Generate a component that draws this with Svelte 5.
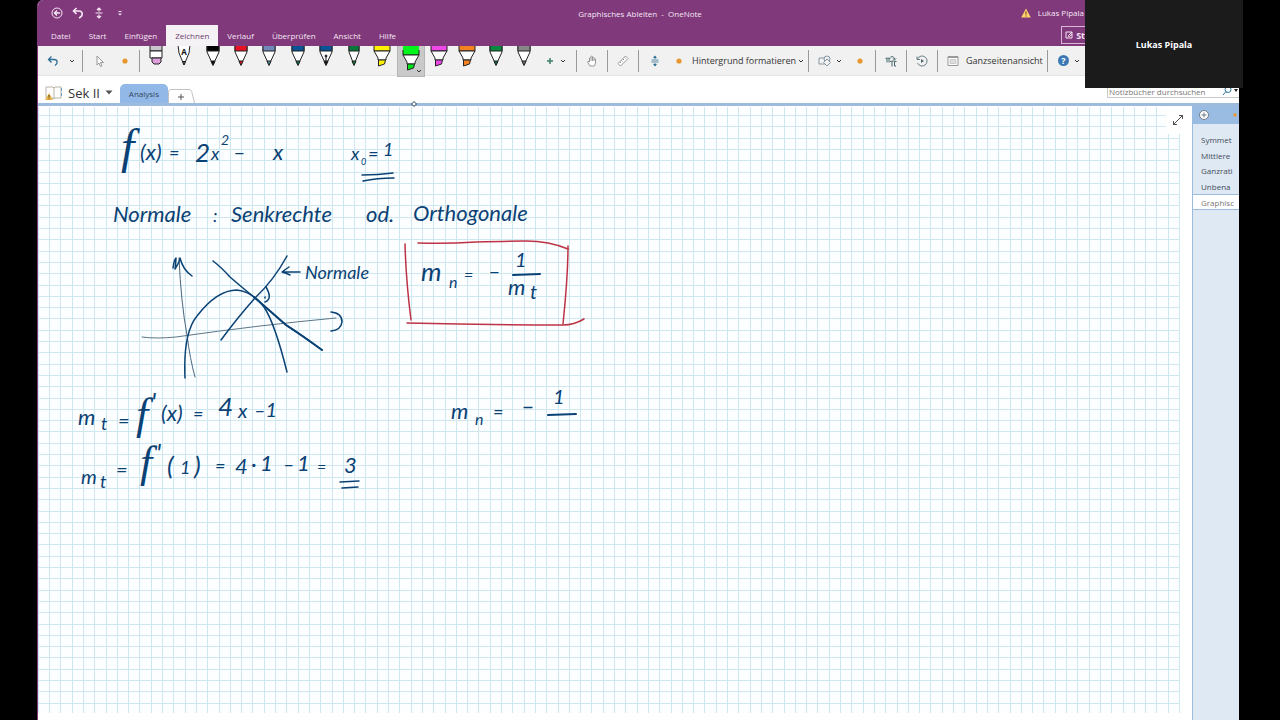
<script lang="ts">
  interface Pen {
    readonly kind: "eraser" | "text" | "pen" | "fountain" | "pencil" | "marker";
    readonly color: string;
    readonly tip: string;
    readonly label: string;
  }

  interface Note {
    readonly x: number;
    readonly y: number;
    readonly size: number;
    readonly text: string;
  }

  const tabs = ["Datei", "Start", "Einfügen", "Zeichnen", "Verlauf", "Überprüfen", "Ansicht", "Hilfe"];
  const pages = ["Symmet", "Mittlere", "Ganzrati", "Unbena", "Graphisc"];

  const pens: Pen[] = [
    { kind: "eraser", color: "#c9c5cc", tip: "#dda0dd", label: "Radierer" },
    { kind: "text", color: "#f2f2f2", tip: "#777", label: "Textstift" },
    { kind: "pen", color: "#000", tip: "#000", label: "Stift schwarz" },
    { kind: "pen", color: "#e81224", tip: "#e81224", label: "Stift rot" },
    { kind: "pen", color: "#7088b8", tip: "#4b9aa8", label: "Stift Galaxie" },
    { kind: "pen", color: "#0b5394", tip: "#087a55", label: "Stift blau" },
    { kind: "fountain", color: "#0b5394", tip: "#111", label: "Füller blau" },
    { kind: "pencil", color: "#08783b", tip: "#08783b", label: "Stift grün" },
    { kind: "marker", color: "#fff100", tip: "#fff100", label: "Textmarker gelb" },
    { kind: "marker", color: "#00f51a", tip: "#00e51a", label: "Textmarker grün" },
    { kind: "marker", color: "#ee48e8", tip: "#ee48e8", label: "Textmarker pink" },
    { kind: "marker", color: "#f58220", tip: "#f58220", label: "Textmarker orange" },
    { kind: "pen", color: "#08873e", tip: "#08783b", label: "Stift dunkelgrün" },
    { kind: "pen", color: "#888", tip: "#777", label: "Bleistift" },
  ];

  const notes: Note[] = [
    { x: 121, y: 163, size: 48, text: "f" },
    { x: 140, y: 160, size: 22, text: "(x)" },
    { x: 169, y: 159, size: 18, text: "=" },
    { x: 195, y: 162, size: 26, text: "2" },
    { x: 211, y: 160, size: 18, text: "x" },
    { x: 221, y: 145, size: 14, text: "2" },
    { x: 233, y: 160, size: 22, text: "–" },
    { x: 273, y: 160, size: 22, text: "x" },
    { x: 351, y: 160, size: 18, text: "x" },
    { x: 361, y: 165, size: 9, text: "0" },
    { x: 368, y: 160, size: 18, text: "=" },
    { x: 383, y: 156, size: 18, text: "1" },
    { x: 113, y: 222, size: 22, text: "Normale" },
    { x: 213, y: 222, size: 18, text: ":" },
    { x: 231, y: 222, size: 22, text: "Senkrechte" },
    { x: 366, y: 222, size: 22, text: "od." },
    { x: 413, y: 221, size: 22, text: "Orthogonale" },
    { x: 305, y: 279, size: 18, text: "Normale" },
    { x: 421, y: 281, size: 26, text: "m" },
    { x: 449, y: 288, size: 16, text: "n" },
    { x: 464, y: 281, size: 16, text: "=" },
    { x: 488, y: 279, size: 22, text: "–" },
    { x: 515, y: 267, size: 20, text: "1" },
    { x: 508, y: 295, size: 22, text: "m" },
    { x: 530, y: 299, size: 20, text: "t" },
    { x: 78, y: 425, size: 22, text: "m" },
    { x: 101, y: 430, size: 18, text: "t" },
    { x: 118, y: 428, size: 20, text: "=" },
    { x: 136, y: 429, size: 44, text: "f" },
    { x: 151, y: 411, size: 26, text: "'" },
    { x: 161, y: 421, size: 22, text: "(x)" },
    { x: 193, y: 420, size: 18, text: "=" },
    { x: 218, y: 416, size: 26, text: "4" },
    { x: 238, y: 418, size: 20, text: "x" },
    { x: 254, y: 417, size: 20, text: "–1" },
    { x: 81, y: 484, size: 20, text: "m" },
    { x: 100, y: 488, size: 18, text: "t" },
    { x: 116, y: 477, size: 20, text: "=" },
    { x: 140, y: 477, size: 44, text: "f" },
    { x: 156, y: 462, size: 26, text: "'" },
    { x: 167, y: 475, size: 26, text: "(" },
    { x: 180, y: 474, size: 18, text: "1" },
    { x: 194, y: 475, size: 26, text: ")" },
    { x: 215, y: 472, size: 18, text: "=" },
    { x: 235, y: 474, size: 22, text: "4" },
    { x: 251, y: 472, size: 22, text: "·" },
    { x: 260, y: 471, size: 22, text: "1" },
    { x: 283, y: 471, size: 20, text: "–" },
    { x: 297, y: 471, size: 22, text: "1" },
    { x: 317, y: 473, size: 16, text: "=" },
    { x: 344, y: 473, size: 22, text: "3" },
    { x: 451, y: 419, size: 22, text: "m" },
    { x: 475, y: 425, size: 16, text: "n" },
    { x: 493, y: 418, size: 18, text: "=" },
    { x: 521, y: 414, size: 24, text: "–" },
    { x: 553, y: 404, size: 20, text: "1" },
  ];

  // ten cells every 113px
  const gridLines = [0, 11, 23, 34, 45, 57, 68, 79, 90, 102];

  let activeTab = $state("Zeichnen");
  let activePage = $state("Graphisc");
  let activePen = $state("Textmarker grün");
</script>

{#snippet chevron()}
  <svg class="chevron" viewBox="0 0 6 6" aria-hidden="true"><path d="M1 2l2 2 2-2" /></svg>
{/snippet}

{#snippet dot()}
  <svg class="dot" viewBox="0 0 6 6" aria-hidden="true"><circle cx="3" cy="3" r="2.6" /></svg>
{/snippet}

{#snippet penShape(pen: Pen)}
  <svg class="pen-icon" viewBox="0 0 18 26" aria-hidden="true">
    {#if pen.kind === "eraser"}
      <path d="M3 -1h12v6H3z" fill={pen.color} />
      <path d="M3 5h12v7H3z" fill="#fff" />
      <path d="M5 12h9v4l-2 2H7l-2-2z" fill={pen.tip} />
    {:else if pen.kind === "marker"}
      <path d="M1 -1h16v6H1z" fill={pen.color} />
      <path d="M1 5h16l-4 7v2H5v-2z" fill="#fff" />
      <path d="M5.500 14h7l-1 4-6 2z" fill={pen.tip} />
    {:else if pen.kind === "text"}
      <path d="M3 -1l1 8 5 12 5-12 1-8" fill="#fff" />
      <path d="M7.500 15.500h3L9 19z" fill={pen.tip} />
      <text x="9" y="9" text-anchor="middle">A</text>
    {:else}
      <path d={pen.kind === "pencil" ? "M4 0h10v6L9 19 4 6z" : "M3 0h12v6L9 19 3 6z"} fill="#fff" />
      <path d={pen.kind === "pencil" ? "M4 -1h10v6H4z" : "M3 -1h12v6H3z"} fill={pen.color} />
      <path d="M7 15h4l-2 4.500z" fill={pen.tip} />
      {#if pen.kind === "fountain"}
        <path d="M9 10v7" /><circle cx="9" cy="10" r="1" fill="#111" />
      {/if}
    {/if}
  </svg>
{/snippet}

<div class="screen">
  <div class="onenote">
    <header class="titlebar">
      <div class="quick">
        <button type="button" aria-label="Zurück">
          <svg viewBox="0 0 12 12"><circle cx="6" cy="6" r="5" /><path d="M9 6H3.500M6 3.500L3.500 6 6 8.500" stroke-width="1.400" /></svg>
        </button>
        <button type="button" aria-label="Rückgängig">
          <svg viewBox="0 0 12 12"><path d="M4.500 1L1.500 4l3 3M2 4h5c4 0 4.500 5 0 7" stroke-width="1.600" /></svg>
        </button>
        <button type="button" aria-label="Platz einfügen">
          <svg viewBox="0 0 12 12"><path d="M2.500 6h7M6 1v3.500M6 7.500V11M4 3l2-2 2 2M4 9l2 2 2-2" stroke-width="1.200" /></svg>
        </button>
        <button type="button" aria-label="Anpassen">
          <svg viewBox="0 0 12 12"><path d="M4.500 4.500h3" /><path d="M4 6.500h4L6 8.500z" fill="currentColor" stroke="none" /></svg>
        </button>
      </div>
      <h1>Graphisches Ableiten&nbsp; -&nbsp; OneNote</h1>
      <div class="account">
        <svg class="warning" viewBox="0 0 10 10" aria-hidden="true"><path d="M5 0.500L9.800 9.500H0.200z" fill="#ffd36b" /><path d="M5 3.500v3M5 7.500v1" stroke="#5b3522" /></svg>
        <span>Lukas Pipala</span>
      </div>
    </header>

    <nav class="tabs">
      {#each tabs as tab}
        <button type="button" class:active={tab === activeTab} onclick={() => (activeTab = tab)}>{tab}</button>
      {/each}
      <button type="button" class="pen-mode">
        <svg viewBox="0 0 8 8" aria-hidden="true"><path d="M7 1H1v6h6V1L3.500 4.500v1h1L7 3" /></svg>
        St
      </button>
    </nav>

    <div class="ribbon" role="toolbar" aria-label="Zeichnen">
      <div class="group undo">
        <button type="button" class="tool" aria-label="Rückgängig">
          <svg class="icon blue" viewBox="0 0 12 12"><path d="M4.500 1.500L1.500 4.500l3 3M2 4.500h5c4 0 4 4 1 6" stroke-width="1.300" /></svg>
        </button>
        {@render chevron()}
      </div>
      <div class="group select">
        <button type="button" class="tool" aria-label="Auswählen">
          <svg class="icon" viewBox="0 0 12 12"><path d="M4 1v9l2-2 1.500 3.500 1.500-.7L7.500 7.500h3z" fill="#fff" /></svg>
        </button>
        {@render dot()}
      </div>
      <div class="pens">
        {#each pens as pen}
          <button
            type="button"
            class="pen"
            class:active={pen.label === activePen}
            aria-label={pen.label}
            onclick={() => (activePen = pen.label)}
          >
            {@render penShape(pen)}
            {#if pen.label === activePen}
              <span class="pen-menu">{@render chevron()}</span>
            {/if}
          </button>
        {/each}
      </div>
      <div class="group add">
        <button type="button" class="tool" aria-label="Stift hinzufügen">
          <svg class="icon green" viewBox="0 0 12 12"><path d="M6 3v6M3 6h6" stroke-width="1.500" /></svg>
        </button>
        {@render chevron()}
      </div>
      <div class="group single">
        <button type="button" class="tool" aria-label="Verschieben">
          <svg class="icon" viewBox="0 0 12 12"><path d="M4 11L1.500 7q0-1.500 2 0V3q1-1.500 1.500 0V1.500q1-1 1.500 0V3q1-1.500 1.500 0v1q1.500-1 1.500 0v4l-1 3zM5 3v3M6.500 3v3M8 4v2" fill="#fff" /></svg>
        </button>
      </div>
      <div class="group single">
        <button type="button" class="tool" aria-label="Lineal">
          <svg class="icon" viewBox="0 0 12 12"><path d="M1 8.500L8.500 1 11 3.500 3.500 11zM3 7l1 1M4.500 5.500l1 1M6 4l1 1M7.500 2.500l1 1" fill="#fff" /></svg>
        </button>
      </div>
      <div class="group format">
        <button type="button" class="tool" aria-label="Platz einfügen">
          <svg class="icon blue" viewBox="0 0 12 12"><path d="M2.500 5h7M2.500 7h7M6 1v3M6 8v3" stroke-width=".8" /><path d="M4 3l2-2.500L8 3zM4 9l2 2.500L8 9z" fill="currentColor" stroke="none" /></svg>
        </button>
        {@render dot()}
        <button type="button" class="label">Hintergrund formatieren {@render chevron()}</button>
      </div>
      <div class="group shapes">
        <button type="button" class="tool" aria-label="Formen">
          <svg class="icon wide" viewBox="0 0 14 12"><path d="M1 3h6v6H1z" /><circle cx="9" cy="4" r="3" fill="#f1f1f1" /><path d="M9 4l3.500 3.500L9 11 5.500 7.500z" fill="#f1f1f1" /></svg>
        </button>
        {@render chevron()}
        {@render dot()}
      </div>
      <div class="group single">
        <button type="button" class="tool" aria-label="Freihand in Formel">
          <svg class="icon dark" viewBox="0 0 12 12"><path d="M0.500 3.500q2-1 5 0M2 3.500v4M4 3.500v4M5 6.500q3-1 6.500 0M7 6.500v5M9.500 6.500V11h1.500M5.500 2Q9 .5 9.500 4.500M8 3.500l1.500 1.500L11 3.500" /></svg>
        </button>
      </div>
      <div class="group single">
        <button type="button" class="tool" aria-label="Wiedergabe">
          <svg class="icon dark" viewBox="0 0 12 12"><path d="M1.500 4A5 5 0 1 1 1.500 8M1 1.500V4.500h3" stroke-width=".8" /><path d="M5 4l3 2-3 2z" fill="#47656d" stroke="none" /></svg>
        </button>
      </div>
      <div class="group fullpage">
        <button type="button" class="label">
          <svg class="icon" viewBox="0 0 12 12" aria-hidden="true"><path d="M1 1.500h10v9H1zM1 2.500h10" fill="#fff" /><path d="M3 4.500h6v4H3z" fill="#ddd" stroke="#ccc" /></svg>
          Ganzseitenansicht
        </button>
      </div>
      <div class="group help">
        <button type="button" class="help-button" aria-label="Hilfe">?</button>
        {@render chevron()}
      </div>
    </div>

    <div class="sections">
      <button type="button" class="notebook">
        <svg viewBox="0 0 18 16" aria-hidden="true">
          <path d="M1 2h7l1 1 1-1h6v11h-6l-1 1-1-1H1zM9 3v11" fill="#fff" stroke="#b9b2a6" />
          <path d="M16.500 3v3M16.500 8v3" stroke="#6f9cc4" />
          <path d="M4 8l4 7H0z" fill="#e8b54b" stroke="none" />
          <path d="M4 10v2.500M4 13.500v.8" stroke="#5b3d16" />
        </svg>
        <span>Sek II</span>
        <svg class="caret" viewBox="0 0 8 5" aria-hidden="true"><path d="M0.500 0.500h7L4 4.500z" /></svg>
      </button>
      <button type="button" class="section">Analysis</button>
      <button type="button" class="new-section" aria-label="Neuer Abschnitt">
        <svg viewBox="0 0 27 14" aria-hidden="true"><path d="M0.500 14V3q0-2.500 2.500-2.500h18q2 0 2.700 2L26.500 14" fill="#fff" stroke="#c2c2c2" /><path d="M10 8h6M13 5v6" stroke="#555" /></svg>
      </button>
      <label class="search">
        <input type="text" placeholder="Notizbücher durchsuchen" aria-label="Notizbücher durchsuchen" />
        <svg viewBox="0 0 16 10" aria-hidden="true"><circle cx="6" cy="3.500" r="3" /><path d="M4 5.500L1 9" /><path d="M12 3h4l-2 3z" fill="#222" stroke="none" /></svg>
      </label>
    </div>

    <div class="workspace">
      <main class="page">
        <svg class="grid" aria-hidden="true">
          <defs>
            <pattern id="squares" x="11" y="8" width="113" height="113" patternUnits="userSpaceOnUse">
              {#each gridLines as at}
                <rect x={at} y="0" width="1" height="113" />
                <rect x="0" y={at} width="113" height="1" />
              {/each}
            </pattern>
          </defs>
          <rect width="100%" height="100%" fill="url(#squares)" />
        </svg>

        <svg class="ink" viewBox="38 106 560 400" role="img" aria-label="Notizen zur Normalengleichung">
          {#each notes as note}
            <text class:function-name={note.text === "f"} x={note.x} y={note.y} font-size={note.size}>{note.text}</text>
          {/each}

          <g class="stroke">
            <path d="M362 175q16 0 31-2M363 181q14-3 31-3" />
            <path d="M513 275l27-1" stroke-width="2" />
            <path d="M340 482l19-1M342 488l16-1" />
            <path d="M548 415l28-1" stroke-width="2" />
          </g>

          <!-- parabola with tangent and normal -->
          <g class="stroke">
            <path d="M142 337q14 2 34 0Q260 325 336 318" stroke-width="1" stroke="#5d7688" />
            <path d="M179 258q2 45 8 77 3 24 8 42" stroke-width="1" stroke="#49677e" />
            <path d="M173 268q1-8 3-10 0 3-1 11 5-8 5-11 3 12 12 18" />
            <path d="M185 378Q183 333 197 316 217 290 237 290 253 292 264 307C274 322 281 348 287 372" />
            <path d="M213 261q8 6 17 16 8 7 25 21l31 27q17 11 36 25" />
            <path d="M254 297l32 28q17 11 36 25" stroke-width="2" />
            <path d="M287 256q-13 24-32 42-17 19-34 42" />
            <path d="M266 287q7 12-1 15M265 297v1" />
            <path d="M331 312q11 1 11 10-1 8-11 9" />
            <path d="M300 272q-9 0-18 0 4-3 7-5M282 272q4 1 8 3" />
          </g>

          <g class="stroke red">
            <path d="M405 244q1 37 6 76" />
            <path d="M418 243q28 1 58-1 30-1 50-1 23 0 42 8" />
            <path d="M568 246q0 30-5 78" />
            <path d="M407 323q79 2 156 2 11 0 21-6" />
          </g>
        </svg>

        <button type="button" class="expand" aria-label="Ganzseitenansicht">
          <svg viewBox="0 0 12 12"><path d="M1.500 10.500l9-9M7 1.500h3.500V5M1.500 7v3.500H5" stroke-width=".8" /></svg>
        </button>
        <svg class="pointer" viewBox="0 0 8 8" aria-hidden="true"><path d="M4 1.500L6.500 4 4 6.500 1.500 4z" /></svg>
      </main>

      <aside class="sidebar">
        <div class="sidebar-head">
          <button type="button" aria-label="Seite hinzufügen">
            <svg viewBox="0 0 10 10"><circle cx="5" cy="5" r="4.500" /><path d="M5 2.500v5M2.500 5h5" /></svg>
          </button>
          {@render dot()}
        </div>
        <ul>
          {#each pages as page}
            <li class:active={page === activePage}>
              <button type="button" onclick={() => (activePage = page)}>{page}</button>
            </li>
          {/each}
        </ul>
      </aside>
    </div>
  </div>

  <div class="participant">Lukas Pipala</div>
</div>

<style>
  :global(body) {
    background: #000;
  }

  .screen {
    position: relative;
    box-sizing: border-box;
    height: 100vh;
    padding: 0 41px 0 37px;
    overflow: hidden;
    background: #000;
    font-family: "Open Sans", "Noto Sans", sans-serif;
    font-size: 9px;
    color: #333;
  }

  .onenote {
    display: flex;
    flex-direction: column;
    height: 100%;
    box-sizing: border-box;
    border-left: 1px solid #80397b;
    border-radius: 6px 0 0 0;
    overflow: hidden;
    background: #fff;
  }

  button {
    margin: 0;
    border: 0;
    padding: 0;
    background: none;
    font: inherit;
    color: inherit;
    cursor: pointer;
  }

  svg {
    display: block;
    flex: none;
    fill: none;
    stroke: currentColor;
  }

  .titlebar {
    display: grid;
    grid-template-columns: 1fr auto 1fr;
    align-items: center;
    height: 25px;
    background: #80397b;
    color: #f5e6f4;
    font-size: 8px;
  }

  .quick {
    display: flex;
    gap: 9px;
    padding-left: 13px;
  }

  .quick svg {
    width: 12px;
    height: 12px;
  }

  h1 {
    margin: 0;
    padding: 2px 0 0 3px;
    font-size: 8px;
    font-weight: 400;
  }

  .account {
    display: flex;
    justify-content: flex-end;
    align-items: center;
    gap: 7px;
    padding-right: 155px;
  }

  .warning {
    width: 10px;
    height: 10px;
    stroke: none;
  }

  .tabs {
    display: flex;
    height: 21px;
    padding-left: 4px;
    background: #80397b;
    color: #f5e6f4;
    font-size: 8px;
  }

  .tabs button {
    padding: 0 9px;
  }

  .tabs .active {
    background: #f4f2f4;
    color: #713b70;
  }

  .tabs .pen-mode {
    display: flex;
    align-items: center;
    gap: 3px;
    height: 18px;
    margin: 1px 133px 0 auto;
    border: 1px solid #dab7d8;
    padding: 0 20px 0 3px;
    font-size: 9px;
    font-weight: 700;
  }

  .pen-mode svg {
    width: 8px;
    height: 8px;
  }

  .ribbon {
    display: flex;
    align-items: center;
    height: 29px;
    border-bottom: 1px solid #e4e4e4;
    background: #f1f1f1;
  }

  .group {
    display: flex;
    align-items: center;
    box-sizing: border-box;
    flex: none;
    height: 22px;
    border-right: 1px solid #999;
  }

  .undo {
    width: 45px;
    gap: 10px;
    padding-left: 9px;
  }

  .select {
    width: 57px;
    gap: 17px;
    padding-left: 10px;
  }

  .add {
    width: 39px;
    gap: 4px;
    padding-left: 6px;
  }

  .single {
    justify-content: center;
    width: 31px;
  }

  .format {
    width: 170px;
    gap: 15px;
    padding-left: 10px;
  }

  .format .label {
    margin-left: -5px;
  }

  .shapes {
    width: 67px;
    gap: 4px;
    padding-left: 9px;
  }

  .shapes .dot {
    margin-left: 11px;
  }

  .fullpage {
    width: 110px;
    padding-left: 9px;
  }

  .help {
    gap: 5px;
    padding-left: 10px;
    border-right: 0;
  }

  .label {
    display: flex;
    align-items: center;
    gap: 2px;
    white-space: nowrap;
  }

  .fullpage .label {
    gap: 7px;
  }

  .icon {
    width: 12px;
    height: 12px;
    color: #999;
  }

  .wide {
    width: 14px;
    color: #8796a2;
  }

  .blue {
    color: #2d7097;
  }

  .green {
    color: #3b8065;
  }

  .dark {
    color: #47656d;
  }

  .chevron {
    width: 6px;
    height: 6px;
    color: #333;
  }

  .dot {
    width: 6px;
    height: 6px;
    fill: #e8982e;
    stroke: none;
  }

  .help-button {
    width: 11px;
    height: 11px;
    border-radius: 50%;
    background: #3c78b4;
    color: #fff;
    font-weight: 700;
    line-height: 11px;
  }

  .pens {
    display: grid;
    grid-template-columns: repeat(14, 1fr);
    flex: none;
    width: 396px;
    height: 29px;
    margin-left: 2px;
  }

  .pen {
    position: relative;
    display: flex;
    justify-content: center;
    align-items: flex-start;
  }

  .pen.active {
    box-sizing: border-box;
    border: 1px solid #b5b5b5;
    border-top: 0;
    padding-top: 4px;
    background: linear-gradient(#00f51a, #00f51a) center top / 16px 5px no-repeat #c9c9c9;
  }

  .pen-icon {
    width: 18px;
    height: 26px;
    stroke: #222;
  }

  .pen-icon text {
    fill: #111;
    stroke: none;
    font-size: 8px;
    font-weight: 700;
  }

  .pen-menu {
    position: absolute;
    right: 2px;
    bottom: 2px;
  }

  .sections {
    display: flex;
    align-items: flex-end;
    height: 27px;
    border-bottom: 3px solid #9dbbdc;
  }

  .notebook {
    display: flex;
    align-items: center;
    gap: 5px;
    height: 20px;
    padding: 0 7px 1px;
    font-size: 13px;
  }

  .notebook svg {
    width: 18px;
    height: 16px;
  }

  .notebook .caret {
    width: 8px;
    height: 5px;
    fill: #555;
    stroke: none;
  }

  .section {
    width: 48px;
    height: 19px;
    border-radius: 5px 5px 0 0;
    background: #91b8e6;
    font-size: 8px;
    color: #34475e;
  }

  .new-section svg {
    width: 27px;
    height: 14px;
  }

  .search {
    display: flex;
    align-items: center;
    box-sizing: border-box;
    width: 132px;
    height: 17px;
    margin: 0 0 5px auto;
    border: 1px solid #c8c8c8;
    border-right: 0;
  }

  .search input {
    flex: 1;
    min-width: 0;
    border: 0;
    padding: 4px 1px 0;
    outline: 0;
    background: none;
    font: inherit;
    font-size: 8px;
  }

  .search input::placeholder {
    color: #777;
  }

  .search svg {
    width: 16px;
    height: 10px;
    padding: 3px 1px 0;
    color: #2d7097;
  }

  .workspace {
    display: flex;
    flex: 1;
    min-height: 0;
  }

  .page {
    position: relative;
    flex: 1;
    min-width: 0;
    padding: 1px 12px 7px 0;
  }

  .grid {
    width: 100%;
    height: 100%;
    fill: #cfe7ee;
    stroke: none;
    background: #fcfeff;
  }

  .ink {
    position: absolute;
    left: 0;
    top: 0;
    width: 560px;
    height: 400px;
    color: #0b4275;
  }

  .ink text {
    fill: #0b4275;
    stroke: none;
    font-family: Lato, sans-serif;
    font-style: italic;
  }

  .ink .function-name {
    font-family: "Liberation Serif", serif;
  }

  .stroke {
    stroke-width: 1.5;
    stroke-linecap: round;
    stroke-linejoin: round;
  }

  .red {
    stroke: #bd3346;
  }

  .expand {
    position: absolute;
    right: 0;
    top: 0;
    padding: 8px 8px 8px 6px;
    background: #fff;
    color: #222;
  }

  .expand svg {
    width: 12px;
    height: 12px;
  }

  .pointer {
    position: absolute;
    left: 372px;
    top: -6px;
    width: 8px;
    height: 8px;
    fill: #fff;
    color: #173d55;
  }

  .sidebar {
    flex: none;
    box-sizing: border-box;
    width: 47px;
    border-left: 1px solid #9dbbdc;
    background: #dfe9f3;
    overflow: hidden;
  }

  .sidebar-head {
    display: flex;
    justify-content: space-between;
    align-items: center;
    height: 18px;
    padding: 0 2px 0 6px;
    background: #9bbce2;
  }

  .sidebar-head button svg {
    width: 10px;
    height: 10px;
    fill: #fff;
    color: #6e7b87;
  }

  .sidebar-head .dot {
    width: 4px;
    height: 4px;
  }

  ul {
    display: grid;
    grid-template-rows: repeat(5, 1fr);
    height: 78px;
    margin: 8px 0 0;
    padding: 0;
    list-style: none;
    font-size: 8px;
    color: #444d5c;
  }

  li {
    display: flex;
    align-items: center;
    padding-left: 8px;
  }

  li.active {
    border: solid #9dbbdc;
    border-width: 1px 0;
    background: #fff;
    color: #777;
  }

  .participant {
    position: absolute;
    top: 0;
    right: 37px;
    display: grid;
    place-items: center;
    width: 158px;
    height: 88px;
    background: #1b1b1b;
    color: #fff;
    font-weight: 700;
  }
</style>
